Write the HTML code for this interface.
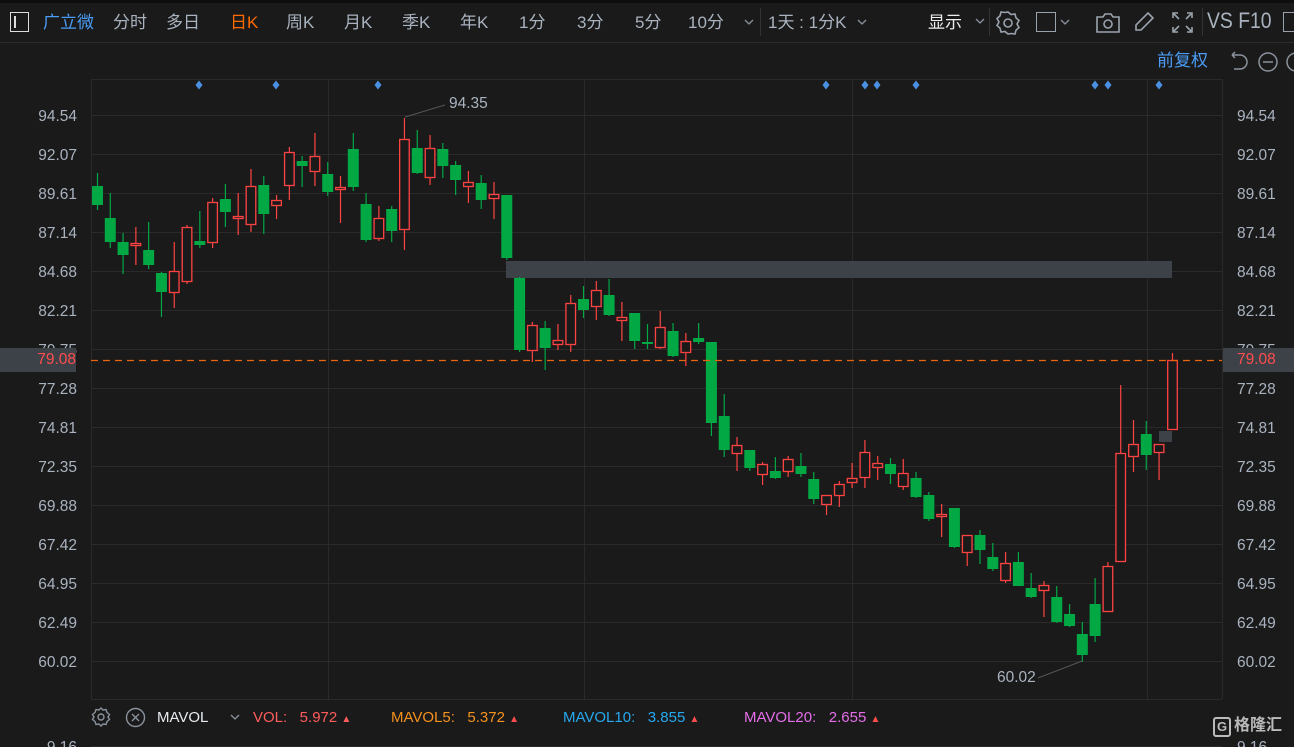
<!DOCTYPE html>
<html><head><meta charset="utf-8"><style>
*{margin:0;padding:0;box-sizing:border-box}
body{width:1294px;height:747px;background:#1a1a1a;overflow:hidden;position:relative;font-family:"Liberation Sans","Noto Sans CJK SC",sans-serif;color:#a9b3bf}
.t{position:absolute;white-space:nowrap;font-size:17px;line-height:20px}
.s{position:absolute;font-size:15px;line-height:18px;white-space:nowrap}
.v{position:absolute}
</style></head><body>
<div style="position:absolute;left:0;top:0;width:1294px;height:3px;background:#0e0e0e"></div>
<div style="position:absolute;left:0;top:42px;width:1294px;height:1px;background:#2c2c2c"></div>
<div style="position:absolute;left:10px;top:12px;width:19px;height:20px;border:1.5px solid #ddd"></div>
<div style="position:absolute;left:14px;top:16px;width:1.5px;height:12px;background:#ddd"></div>
<div class="t" style="left:43px;top:13px;color:#4a9cf5">广立微</div>
<div class="t" style="left:113px;top:13px">分时</div>
<div class="t" style="left:166px;top:13px">多日</div>
<div class="t" style="left:230px;top:13px;color:#ff6a00">日K</div>
<div class="t" style="left:286px;top:13px">周K</div>
<div class="t" style="left:344px;top:13px">月K</div>
<div class="t" style="left:402px;top:13px">季K</div>
<div class="t" style="left:460px;top:13px">年K</div>
<div class="t" style="left:519px;top:13px">1分</div>
<div class="t" style="left:577px;top:13px">3分</div>
<div class="t" style="left:635px;top:13px">5分</div>
<div class="t" style="left:688px;top:13px">10分</div>
<svg class="v" style="left:744px;top:19px" width="10" height="7"><path d="M1 1l4 4 4-4" stroke="#8a939d" fill="none" stroke-width="1.3"/></svg>
<div style="position:absolute;left:760px;top:8px;width:1px;height:28px;background:#333"></div>
<div class="t" style="left:768px;top:13px">1天 : 1分K</div>
<svg class="v" style="left:857px;top:19px" width="10" height="7"><path d="M1 1l4 4 4-4" stroke="#8a939d" fill="none" stroke-width="1.3"/></svg>
<div class="t" style="left:928px;top:13px;color:#eee">显示</div>
<svg class="v" style="left:975px;top:18px" width="10" height="7"><path d="M1 1l4 4 4-4" stroke="#8a939d" fill="none" stroke-width="1.3"/></svg>
<div style="position:absolute;left:989px;top:8px;width:1px;height:28px;background:#333"></div>
<svg style="position:absolute;left:995px;top:10px" width="26" height="26" viewBox="0 0 26 26" fill="none" stroke="#9aa3ad" stroke-width="1.6"><path d="M13 2l3 2.5 4-.5 1 3.8 3 2.7-2 3.5 2 3.5-3 2.7-1 3.8-4-.5L13 24l-3-2.5-4 .5-1-3.8-3-2.7 2-3.5-2-3.5 3-2.7 1-3.8 4 .5z"/><circle cx="13" cy="13" r="4"/></svg>
<div style="position:absolute;left:1036px;top:12px;width:20px;height:20px;border:1.5px solid #9aa3ad"></div>
<svg class="v" style="left:1060px;top:19px" width="10" height="7"><path d="M1 1l4 4 4-4" stroke="#8a939d" fill="none" stroke-width="1.3"/></svg>
<svg style="position:absolute;left:1095px;top:12px" width="26" height="22" viewBox="0 0 26 22" fill="none" stroke="#9aa3ad" stroke-width="1.6"><path d="M2 5h6l2-3h6l2 3h6v15H2z"/><circle cx="13" cy="12" r="4"/></svg>
<svg style="position:absolute;left:1133px;top:11px" width="22" height="22" viewBox="0 0 22 22" fill="none" stroke="#9aa3ad" stroke-width="1.6"><path d="M15 2l5 5L8 19H3v-5z"/></svg>
<svg style="position:absolute;left:1171px;top:11px" width="23" height="23" viewBox="0 0 23 23" fill="none" stroke="#9aa3ad" stroke-width="1.6"><path d="M2 7V2h5M16 2h5v5M21 16v5h-5M7 21H2v-5M3 3l5 5M20 3l-5 5M20 20l-5-5M3 20l5-5"/></svg>
<div style="position:absolute;left:1202px;top:8px;width:1px;height:28px;background:#333"></div>
<div class="t" style="left:1207px;top:11px;font-size:22px;transform:scaleX(.88);transform-origin:left">VS F10</div>
<div style="position:absolute;left:1283px;top:12px;width:16px;height:20px;border:1.5px solid #9aa3ad"></div>

<div class="t" style="left:1157px;top:51px;color:#4a9cf5">前复权</div>
<svg style="position:absolute;left:1228px;top:51px" width="66" height="22" viewBox="0 0 66 22" fill="none" stroke="#8a939d" stroke-width="1.5"><path d="M4 4h8a7 7 0 0 1 0 14H6M4 4l3-3M4 4l3 3"/><circle cx="40" cy="11" r="9"/><path d="M35 11h10"/><circle cx="68" cy="11" r="9"/></svg>

<svg id="c" style="position:absolute;left:0;top:0" width="1294" height="747"></svg>

<div class="s" style="left:0;top:348px;width:76px;height:24px;background:#3d4148"></div>
<div class="s" style="left:1223px;top:348px;width:71px;height:24px;background:#3d4148"></div>

<svg style="position:absolute;left:91px;top:707px" width="20" height="20" viewBox="0 0 20 20" fill="none" stroke="#8a939d" stroke-width="1.4"><path d="M10 1l2 2 3-.5 1 3 2.5 2-1.5 2.5 1.5 2.5-2.5 2-1 3-3-.5-2 2-2-2-3 .5-1-3L1.5 12.5 3 10 1.5 7.5 4 5.5l1-3 3 .5z"/><circle cx="10" cy="10" r="3"/></svg>
<svg style="position:absolute;left:125px;top:707px" width="21" height="21" viewBox="0 0 21 21" fill="none" stroke="#8a939d" stroke-width="1.4"><circle cx="10.5" cy="10.5" r="9"/><path d="M7 7l7 7M14 7l-7 7"/></svg>
<div class="s" style="left:157px;top:709px;color:#e8ecf0">MAVOL</div>
<svg class="v" style="left:230px;top:714px" width="10" height="7"><path d="M1 1l4 4 4-4" stroke="#8a939d" fill="none" stroke-width="1.3"/></svg>
<div class="s" style="left:253px;top:709px;color:#ff5c5c">VOL: &nbsp; 5.972 <span style="font-size:10px">▲</span></div>
<div class="s" style="left:391px;top:709px;color:#f5911e">MAVOL5: &nbsp; 5.372 <span style="font-size:10px;color:#ff4d4d">▲</span></div>
<div class="s" style="left:563px;top:709px;color:#26a9f0">MAVOL10: &nbsp; 3.855 <span style="font-size:10px;color:#ff4d4d">▲</span></div>
<div class="s" style="left:744px;top:709px;color:#e46ee8">MAVOL20: &nbsp; 2.655 <span style="font-size:10px;color:#ff4d4d">▲</span></div>
<div style="position:absolute;left:1213px;top:717px;width:18px;height:20px;border:2px solid #bbb;border-radius:3px;font:bold 13px 'Liberation Sans';color:#bbb;text-align:center;line-height:16px">G</div>
<div class="s" style="left:1234px;top:717px;color:#bbb;font-size:16px;font-weight:bold">格隆汇</div>

<script>
var s=document.getElementById('c'),h='';
function L(x1,y1,x2,y2,c,w,d){h+='<line x1="'+x1+'" y1="'+y1+'" x2="'+x2+'" y2="'+y2+'" stroke="'+c+'" stroke-width="'+(w||1)+'"'+(d?' stroke-dasharray="'+d+'"':'')+'/>';}
function T(x,y,t,c,a){h+='<text x="'+x+'" y="'+y+'" fill="'+(c||'#a9b3bf')+'" font-size="15.5" font-family="Liberation Sans" '+(a?'text-anchor="end"':'')+'>'+t+'</text>';}
var labs=['94.54','92.07','89.61','87.14','84.68','82.21','79.75','77.28','74.81','72.35','69.88','67.42','64.95','62.49','60.02'];
for(var i=0;i<15;i++){var y=115+39*i;L(91,y+.5,1222,y+.5,'#2a2a2a');T(77,y+6,labs[i],null,1);T(1237,y+6,labs[i]);}
[91,328,584,852,1147,1222].forEach(function(x){L(x+.5,79,x+.5,699,'#2a2a2a');});
L(91,79.5,1222,79.5,'#2a2a2a');L(91,699.5,1222,699.5,'#2a2a2a');L(91,746.5,1222,746.5,'#2a2a2a');
T(77,752,'9.16',null,1);T(1237,752,'9.16');
[199,276,378,826,865,877,916,1095,1108,1159].forEach(function(x){h+='<path d="M'+x+' 80.5l3.5 4.5-3.5 4.5-3.5-4.5z" fill="#4a90e2"/>';});
h+='<rect x="506" y="261" width="666" height="17" fill="#3d4148"/>';
h+='<rect x="1159" y="431" width="13" height="11" fill="#3d4148"/>';
var d=[['g',186,205,173,210],['g',218,242,193,248],['g',242,255,233,274],['r',243,246,227,265],['g',250,265,222,269],['g',273,292,272,317],['r',271,293,242,308],['r',227,282,225,284],['g',241,245,211,248],['r',202,243,198,248],['g',199,212,184,227],['r',216,219,193,235],['r',186,225,169,232],['g',185,214,176,234],['r',200,206,195,219],['r',152,186,147,200],['g',161,166,156,187],['r',156,172,133,186],['g',174,192,162,196],['r',187,190,176,223],['g',149,187,133,191],['g',204,240,193,242],['r',218,239,206,241],['g',209,231,206,242],['r',139,230,118,250],['g',148,173,130,174],['r',148,178,135,185],['g',149,166,143,178],['g',165,180,161,195],['r',182,187,171,203],['g',183,200,175,209],['r',194,199,182,219],['g',195,258,195,260],['g',278,350,277,352],['r',325,351,322,362],['g',328,348,321,370],['r',340,345,324,350],['r',303,345,295,352],['g',299,310,286,318],['r',290,307,281,320],['g',295,315,279,316],['r',317,321,302,341],['g',313,341,313,349],['g',342,343,324,349],['r',327,348,311,349],['g',331,356,323,357],['r',341,353,333,366],['g',338,342,323,344],['g',342,423,342,436],['g',416,450,394,457],['r',445,454,437,471],['g',450,468,450,471],['r',464,475,462,485],['g',471,478,457,479],['r',459,472,456,477],['g',466,474,453,477],['g',479,499,472,504],['r',495,505,495,515],['r',484,496,481,507],['r',478,483,463,488],['r',452,478,440,488],['r',463,468,456,480],['g',464,474,458,484],['r',473,487,459,490],['g',478,497,472,498],['g',495,519,492,521],['r',514,517,504,537],['g',508,547,508,548],['r',535,553,535,566],['g',535,550,530,564],['g',557,569,543,571],['r',563,581,552,583],['g',562,586,552,586],['g',588,597,573,598],['r',585,591,581,617],['g',597,622,586,623],['g',614,626,604,627],['g',634,655,622,662],['g',604,636,578,642],['r',566,612,562,612],['r',453,562,385,562],['r',444,457,420,472],['g',434,455,421,470],['r',444,453,444,480],['r',360,430,353,430]];
d.forEach(function(c,i){var x=97.5+12.79*i;if(i==84)x=1172.5;var col=c[0]=='g'?'#02a844':'#ff4343';
L(x,c[3],x,c[4],col,1.2);
if(c[0]=='g')h+='<rect x="'+(x-5.5)+'" y="'+c[1]+'" width="11" height="'+Math.max(2,c[2]-c[1])+'" fill="'+col+'"/>';
else h+='<rect x="'+(x-4.8)+'" y="'+(c[1]+.5)+'" width="9.6" height="'+Math.max(2,c[2]-c[1]-1)+'" fill="#1a1a1a" stroke="'+col+'" stroke-width="1.3"/>';});
L(91,360.5,1222,360.5,'#e8650f',1.2,'7,5');
L(405,117,445,105,'#555');T(449,108,'94.35');
L(1082,661,1038,678,'#555');T(997,682,'60.02');
s.innerHTML=h;
</script>
<div class="s" style="left:0;top:351px;width:76px;text-align:right;color:#ff4d4d;font-size:15.5px">79.08</div>
<div class="s" style="left:1237px;top:351px;color:#ff4d4d;font-size:15.5px">79.08</div>
</body></html>
